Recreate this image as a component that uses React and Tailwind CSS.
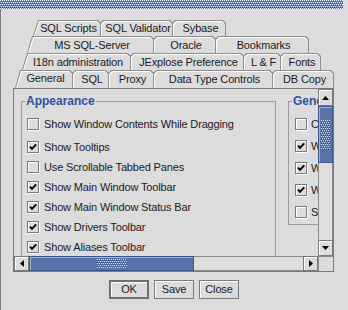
import React from 'react'

// tab runs, top run first; widths include the 1px overlap with the previous tab
const TAB_ROWS = [
  { ml: 'ml-[32px]', h: 'h-[16px]', tabs: [
    { label: 'SQL Scripts', w: 'w-[68px]' },
    { label: 'SQL Validator', w: 'w-[73px]' },
    { label: 'Sybase', w: 'w-[54px]' },
  ] },
  { ml: 'ml-[26px]', h: 'h-[17px]', tabs: [
    { label: 'MS SQL-Server', w: 'w-[127px]' },
    { label: 'Oracle', w: 'w-[63px]' },
    { label: 'Bookmarks', w: 'w-[94px]' },
  ] },
  { ml: 'ml-[21px]', h: 'h-[17px]', tabs: [
    { label: 'I18n administration', w: 'w-[109px]' },
    { label: 'JExplose Preference', w: 'w-[114px]' },
    { label: 'L & F', w: 'w-[38px]' },
    { label: 'Fonts', w: 'w-[41px]' },
  ] },
  { ml: 'ml-[14px]', h: 'h-[18px]', tabs: [
    { label: 'General', w: 'w-[58px]', selected: true },
    { label: 'SQL', w: 'w-[37px]' },
    { label: 'Proxy', w: 'w-[46px]' },
    { label: 'Data Type Controls', w: 'w-[120px]' },
    { label: 'DB Copy', w: 'w-[62px]' },
  ] },
]

const APPEARANCE = [
  { label: 'Show Window Contents While Dragging', checked: false },
  { label: 'Show Tooltips', checked: true },
  { label: 'Use Scrollable Tabbed Panes', checked: false },
  { label: 'Show Main Window Toolbar', checked: true },
  { label: 'Show Main Window Status Bar', checked: true },
  { label: 'Show Drivers Toolbar', checked: true },
  { label: 'Show Aliases Toolbar', checked: true },
]

const GENERAL = [
  { label: 'Confirm session close', checked: false },
  { label: 'Warn if JDBC driver not loaded', checked: true },
  { label: 'Warn on session close', checked: true },
  { label: 'Warn on SQL error', checked: true },
  { label: 'Show load times', checked: false },
]

const Bumps = ({ id, base, hi, lo, className }) => (
  <svg className={className} aria-hidden="true">
    <defs>
      <pattern id={id} width="2" height="4" patternUnits="userSpaceOnUse">
        <rect width="2" height="4" fill={base} />
        <rect x="0" y="0" width="1" height="1" fill={hi} />
        <rect x="1" y="2" width="1" height="1" fill={hi} />
        <rect x="1" y="1" width="1" height="1" fill={lo} />
        <rect x="0" y="3" width="1" height="1" fill={lo} />
      </pattern>
    </defs>
    <rect width="100%" height="100%" fill={`url(#${id})`} />
  </svg>
)

const Tab = ({ label, w, first, selected }) => {
  const clip = first
    ? '[clip-path:polygon(0_100%,5px_0,calc(100%_-_3px)_0,100%_3px,100%_100%)]'
    : '[clip-path:polygon(0_100%,0_3px,3px_0,calc(100%_-_3px)_0,100%_3px,100%_100%)]'
  return (
    <div className={`relative shrink-0 h-full ${w} ${first ? '' : '-ml-px'}`}>
      <div className={`absolute inset-0 bg-[#8e8e8e] ${clip}`} />
      <div className={`absolute top-px left-px right-px bottom-0 bg-white ${clip}`} />
      <div className={`absolute top-[2px] left-[2px] right-px bottom-0 bg-[#dcdcdc] ${clip}`} />
      <span className={`relative flex h-full items-center justify-center pl-[3px] whitespace-nowrap ${selected ? 'pb-[2px]' : 'pt-px'}`}>
        {label}
      </span>
    </div>
  )
}

const CheckBox = ({ checked }) => (
  <div className="w-[12px] h-[12px] shrink-0 border border-[#7a7a7a] shadow-[inset_1px_1px_0_#fff,1px_1px_0_#fff] flex items-center justify-center">
    {checked && (
      <svg width="10" height="10" viewBox="0 0 10 10">
        <path d="M2 4.6 L4 6.8 L8.2 2.4" fill="none" stroke="#000" strokeWidth="1.9" />
      </svg>
    )}
  </div>
)

const Arrow = ({ dir }) => {
  const pts = {
    up: '0,4 7,4 3.5,0',
    down: '0,0 7,0 3.5,4',
    left: '4,0 4,7 0,3.5',
    right: '0,0 0,7 4,3.5',
  }[dir]
  const vertical = dir === 'up' || dir === 'down'
  return (
    <svg width={vertical ? 7 : 4} height={vertical ? 4 : 7} viewBox={vertical ? '0 0 7 4' : '0 0 4 7'}>
      <polygon points={pts} fill="#000" />
    </svg>
  )
}

const ScrollButton = ({ dir, className }) => (
  <div className={`shrink-0 bg-[#dcdcdc] border border-[#7a7a7a] shadow-[inset_1px_1px_0_#fff] flex items-center justify-center ${className}`}>
    <Arrow dir={dir} />
  </div>
)

const Button = ({ children, isDefault }) => (
  <button
    className={`w-[40px] h-[19px] flex items-center justify-center bg-[#dcdcdc] shadow-[inset_1px_1px_0_#fff] ${isDefault ? 'border-2 border-[#707070]' : 'border border-[#7a7a7a]'}`}
  >
    {children}
  </button>
)

export default function App() {
  return (
    <div className="w-[348px] h-[310px] bg-[#dcdcdc] overflow-hidden font-['Liberation_Sans',Arial,sans-serif] text-[11px] tracking-[-0.15px] text-[#1e1826]">
      <Bumps id="bumpsTitle" base="#6481bb" hi="#e6ecf7" lo="#40598f" className="block w-[343px] h-[9px]" />

      <div className="h-[301px] border-l border-[#7c7c7c]">
        {/* tab runs */}
        <div className="pt-[11px] flex flex-col">
          {TAB_ROWS.map((row, ri) => (
            <div key={ri} className={`flex ${row.ml} ${row.h}`}>
              {row.tabs.map((t, i) => (
                <Tab key={t.label} {...t} first={i === 0} />
              ))}
            </div>
          ))}
        </div>

        {/* scroll pane */}
        <div className="ml-[12px] w-[321px] h-[184px] border border-[#7a7a7a] grid grid-cols-[304px_15px] grid-rows-[167px_15px] overflow-hidden">
          <div className="w-[304px] h-[167px] overflow-hidden flex items-start pl-[7px]">
            {/* Appearance */}
            <div className="relative shrink-0 mt-[12px] w-[255px] h-[200px] border border-[#9c9c9c] pt-[12px] pl-[5px]">
              <span className="absolute -top-[8px] left-[3px] px-px bg-[#dcdcdc] text-[12px] leading-[14px] font-bold tracking-normal text-[#3350a0]">
                Appearance
              </span>
              {APPEARANCE.map((c, i) => (
                <div key={c.label} className={`flex items-center gap-[5px] h-[20px] ${i === 0 ? 'mb-[3px]' : ''}`}>
                  <CheckBox checked={c.checked} />
                  <span className="whitespace-nowrap">{c.label}</span>
                </div>
              ))}
            </div>

            {/* General */}
            <div className="relative shrink-0 ml-[12px] mt-[12px] w-[180px] h-[124px] border border-[#9c9c9c] pt-[11px] pl-[6px]">
              <span className="absolute -top-[8px] left-[3px] px-px bg-[#dcdcdc] text-[12px] leading-[14px] font-bold tracking-normal text-[#3350a0]">
                General
              </span>
              {GENERAL.map(c => (
                <div key={c.label} className="flex items-center gap-[4px] h-[22px]">
                  <CheckBox checked={c.checked} />
                  <span className="whitespace-nowrap">{c.label}</span>
                </div>
              ))}
            </div>
          </div>

          {/* vertical scrollbar */}
          <div className="w-[15px] h-[167px] flex flex-col">
            <ScrollButton dir="up" className="h-[17px]" />
            <div className="h-[57px] shrink-0 bg-[#5873a8] border border-[#3d5589] shadow-[inset_1px_1px_0_#9fb2d8] flex items-center justify-center">
              <Bumps id="bumpsV" base="#5873a8" hi="#d3ddf0" lo="#3d5589" className="block w-[9px] h-[30px]" />
            </div>
            <div className="flex-1 bg-[#dedede] border-x border-[#8a8a8a]" />
            <ScrollButton dir="down" className="h-[16px]" />
          </div>

          {/* horizontal scrollbar */}
          <div className="w-[304px] h-[15px] flex">
            <ScrollButton dir="left" className="w-[15px]" />
            <div className="w-[165px] shrink-0 bg-[#5873a8] border border-[#3d5589] shadow-[inset_1px_1px_0_#9fb2d8] flex items-center justify-center">
              <Bumps id="bumpsH" base="#5873a8" hi="#d3ddf0" lo="#3d5589" className="block w-[30px] h-[9px]" />
            </div>
            <div className="flex-1 bg-[#dedede] border-y border-[#8a8a8a]" />
            <ScrollButton dir="right" className="w-[15px]" />
          </div>
          <div className="bg-[#dcdcdc] border-l border-t border-[#8a8a8a]" />
        </div>

        {/* dialog buttons */}
        <div className="flex gap-[5px] pl-[108px] mt-[8px]">
          <Button isDefault>OK</Button>
          <Button>Save</Button>
          <Button>Close</Button>
        </div>
      </div>
    </div>
  )
}
